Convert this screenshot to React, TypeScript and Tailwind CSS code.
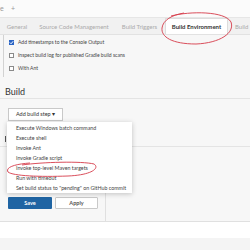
import React from "react";

const font = { fontFamily: 'Lato, "Open Sans", "Noto Sans", sans-serif' };

const tabs = [
  { label: "General", w: "w-[34px]" },
  { label: "Source Code Management", w: "w-[80px]" },
  { label: "Build Triggers", w: "w-[51px]" },
];

const menuItems = [
  "Execute Windows batch command",
  "Execute shell",
  "Invoke Ant",
  "Invoke Gradle script",
  "Invoke top-level Maven targets",
  "Run with timeout",
  'Set build status to "pending" on GitHub commit',
];

function Check({ checked, label }: { checked?: boolean; label: string }) {
  return (
    <div className="flex items-center h-[13px]">
      {checked ? (
        <span className="w-[5px] h-[5px] ml-[1px] bg-[#2a64c4] flex items-center justify-center">
          <svg viewBox="0 0 6 6" className="w-[5px] h-[5px]">
            <path d="M1 3 L2.5 4.5 L5 1.5" stroke="#fff" strokeWidth="1.2" fill="none" />
          </svg>
        </span>
      ) : (
        <span className="w-[5px] h-[5px] ml-[1px] bg-white border border-[#8a8a8a]" />
      )}
      <span className="ml-[4px] text-[5px] text-[#444] whitespace-nowrap">{label}</span>
    </div>
  );
}

export default function App() {
  return (
    <div className="relative w-[250px] h-[250px] overflow-hidden bg-[#f7f7f7] text-[#333]" style={font}>
      <div className="h-[18px] bg-[#fbfbfb] border-b border-[#e6e6e6] flex items-center text-[7px] text-[#999]">
        <span className="w-[11px]">e</span>
        <span>+</span>
      </div>

      <div className="h-[17px] bg-[#f1f1f1] border-b border-[#e2e2e2] flex items-end text-[6px] text-[#aaa] whitespace-nowrap">
        {tabs.map((t) => (
          <div key={t.label} className={`${t.w} h-[16px] flex items-center justify-center`}>
            {t.label}
          </div>
        ))}
        <div className="w-[63px] h-[16px] flex items-center justify-center bg-white border-x border-t border-[#ddd] font-bold text-[#333]">
          Build Environment
        </div>
        <div className="h-[16px] pl-[7px] flex items-center">Build</div>
      </div>

      <div className="ml-[3px] border-l border-[#d2d2d2] pl-[4px] pt-[1px] pb-[2px] flex flex-col">
        <Check checked label="Add timestamps to the Console Output" />
        <Check label="Inspect build log for published Gradle build scans" />
        <Check label="With Ant" />
      </div>

      <div className="mt-[9px] h-[13px] border-b border-[#e4e4e4] px-[5px] text-[9px] leading-[11px] text-[#333]">
        Build
      </div>

      <div className="mt-[9px] ml-[8px] w-[55px] h-[13px] bg-white border border-[#c9c9c9] flex items-center justify-center text-[5.5px] text-[#333]">
        Add build step ▾
      </div>

      <div className="ml-[5px] mt-[15px] h-[6px] w-[1px] bg-[#555]" />
      <div className="mt-[4px] border-b border-[#e4e4e4]" />

      <div className="mt-[50px] ml-[8px] flex gap-[3px]">
        <div className="w-[44px] h-[12px] bg-[#1f64a3] rounded-[1px] flex items-center justify-center text-[5.5px] font-bold text-white">
          Save
        </div>
        <div className="w-[43px] h-[12px] bg-white border border-[#c9c9c9] rounded-[1px] flex items-center justify-center text-[5.5px] font-bold text-[#555]">
          Apply
        </div>
      </div>

      <div className="absolute left-[105px] top-[148px] w-[1px] h-[73px] bg-[#e0e0e0]" />
      <div className="absolute left-0 top-[221px] w-[250px] h-[17px] bg-white border-t border-[#e0e0e0]" />
      <div className="absolute left-0 top-[238px] w-[250px] h-[12px] bg-[#f4f4f4]" />

      <div className="absolute left-[7px] top-[122px] w-[125px] h-[71px] bg-white shadow-[0_1px_5px_rgba(0,0,0,0.22)] pt-[2px] text-[5.3px] text-[#444]">
        {menuItems.map((m) => (
          <div key={m} className="h-[10px] pl-[9px] flex items-center whitespace-nowrap">
            {m}
          </div>
        ))}
      </div>

      <svg className="absolute left-0 top-0 w-[250px] h-[250px] pointer-events-none" viewBox="0 0 250 250">
        <path
          d="M171 16 C190 11 225 11 231 22 C235 33 220 43 196 44 C172 44 161 37 162 28 C163 20 172 15 184 13"
          stroke="#d63b4a"
          strokeWidth="0.9"
          fill="none"
        />
        <path
          d="M22 165 C42 162 82 161 94 164 C100 168 92 175 68 176 C40 177 13 176 8 172 C5 167 16 164 30 163"
          stroke="#d63b4a"
          strokeWidth="0.9"
          fill="none"
        />
      </svg>
    </div>
  );
}
